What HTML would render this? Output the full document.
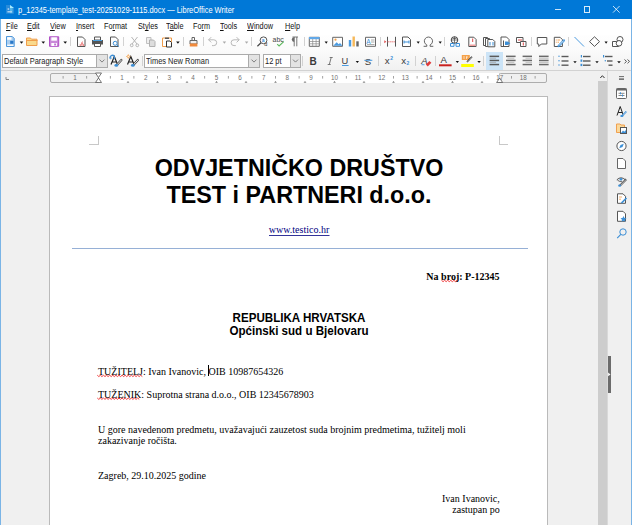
<!DOCTYPE html>
<html><head><meta charset="utf-8">
<style>
*{margin:0;padding:0;box-sizing:border-box}
html,body{width:632px;height:525px;overflow:hidden;background:#f0f0f0;font-family:"Liberation Sans",sans-serif;position:relative}
.a{position:absolute}
svg{position:absolute;overflow:visible}
#title{left:0;top:0;width:632px;height:19px;background:#0078d7;color:#fff}
.ui{font-size:7.3px;white-space:nowrap;line-height:10px}
#menu u{text-decoration:underline;text-decoration-thickness:0.7px;text-underline-offset:0.5px}
#menu span{font-size:8.3px;transform:scaleX(0.88);transform-origin:0 0;color:#111}
#menu{left:1px;top:19px;width:630px;height:16px;background:#fff;color:#000}
#tbs{left:1px;top:35px;width:630px;height:35px;background:linear-gradient(#fefefe,#fbfbfb 40%,#f1f1f1)}
#tbline{left:1px;top:70px;width:630px;height:1px;background:#d2d2d2}
#page{left:49px;top:96px;width:499px;height:440px;background:#fff;border:1px solid #bababa}
.bl{left:0;top:19px;width:1px;height:506px;background:#7ab4e6}
.br{left:631px;top:19px;width:1px;height:506px;background:#7ab4e6}
.serif{font-family:"Liberation Serif",serif;font-size:10px;line-height:12px;white-space:nowrap;color:#000}
.sans{font-family:"Liberation Sans",sans-serif;white-space:nowrap;color:#000;font-weight:bold}
.sq{height:3px;background-image:linear-gradient(135deg,transparent 40%,#e33 40%,#e33 65%,transparent 65%),linear-gradient(45deg,transparent 40%,#e33 40%,#e33 65%,transparent 65%);background-size:3px 3px;background-repeat:repeat-x}
</style></head><body>
<div id="title" class="a">
  <svg style="left:0;top:0" width="20" height="19" viewBox="0 0 20 19"><path d="M6 5h4l4 3v5.7h-8z" fill="#3a93dc" opacity="0.7"/><path d="M10 4.9l4 3.1h-4z" fill="#a8ecff"/><rect x="10" y="8" width="2.6" height="5.2" fill="#5fc0ee" opacity="0.8"/><rect x="7.6" y="8.3" width="1.6" height="1.5" fill="#b8d8f5"/><rect x="7.4" y="11.1" width="4.6" height="1.4" fill="#b0d4f2"/></svg>
  <div class="a ui" style="left:17.8px;top:4.6px;color:#fff;font-size:8.4px;transform:scaleX(0.887);transform-origin:0 0">p_12345-template_test-20251029-1115.docx — LibreOffice Writer</div>
  <div class="a" style="left:554.6px;top:9px;width:6.6px;height:1px;background:rgba(255,255,255,0.8)"></div>
  <div class="a" style="left:584px;top:6.2px;width:6.4px;height:6.6px;border:0.9px solid rgba(255,255,255,0.85)"></div>
  <svg style="left:613px;top:6.2px" width="7" height="7" viewBox="0 0 7 7"><path d="M0 0L6.6 6.6M6.6 0L0 6.6" stroke="rgba(255,255,255,0.85)" stroke-width="0.9"/></svg>
</div>
<div id="menu" class="a ui">
<span class="a" style="left:5px;top:2.3px"><u>F</u>ile</span><span class="a" style="left:26px;top:2.3px"><u>E</u>dit</span><span class="a" style="left:49px;top:2.3px"><u>V</u>iew</span><span class="a" style="left:75px;top:2.3px"><u>I</u>nsert</span><span class="a" style="left:103px;top:2.3px">Fo<u>r</u>mat</span><span class="a" style="left:137px;top:2.3px">St<u>y</u>les</span><span class="a" style="left:165px;top:2.3px">T<u>a</u>ble</span><span class="a" style="left:192px;top:2.3px">Fo<u>r</u>m</span><span class="a" style="left:219px;top:2.3px"><u>T</u>ools</span><span class="a" style="left:246px;top:2.3px"><u>W</u>indow</span><span class="a" style="left:284px;top:2.3px"><u>H</u>elp</span>
</div>
<div id="tbs" class="a"></div>
<div id="tbline" class="a"></div>
<svg style="left:0;top:0" width="632" height="90" viewBox="0 0 632 90" shape-rendering="geometricPrecision">
<g fill="none" stroke-width="1">
<!-- new doc -->
<path d="M6.5 36.5h5.8l1.9 1.9v8.1h-7.7z" fill="#a9cdef" stroke="#4f97da"/>
<rect x="7.2" y="37.2" width="4.3" height="2.6" fill="#fff"/>
<rect x="7.2" y="44.6" width="6.2" height="1.3" fill="#fff"/>
<path d="M10.2 40.8h3.2v3h-3.2z" fill="#2a78c8"/>
<!-- open folder -->
<path d="M26.5 38h4l1 1.2h5.5v6.3h-10.5z" stroke="#ef9c4a" fill="#f9d98c"/>
<path d="M26.5 40.5h11" stroke="#ef9c4a"/>
<!-- save -->
<path d="M49.5 36.8h9.2v9.5h-9.2z" stroke="#b050c6" fill="#c98ad8"/>
<rect x="51.3" y="37.3" width="5.6" height="3.4" fill="#fff"/>
<rect x="51.3" y="43" width="5.6" height="3" fill="#fff"/>
<rect x="54.3" y="43.5" width="1.5" height="2" fill="#b050c6"/>
<!-- pdf -->
<path d="M77.5 37h5l2.5 2.5v7h-7.5z" stroke="#555"/>
<path d="M82.5 41.5l-2 4.2M82 42.5l2 3.5M79.5 45h4.5" stroke="#e86a6a" stroke-width="0.8"/>
<!-- print -->
<path d="M94.5 37h6v3h-6z" stroke="#555" fill="#fff"/>
<rect x="92" y="40" width="11" height="4.5" fill="#555"/>
<path d="M93 40.5h9" stroke="#4aa0e0"/>
<path d="M94.5 44v2.5h6v-2.5" stroke="#555" fill="#fff"/>
<!-- print preview -->
<path d="M110.5 37h5l2.5 2.5v7h-7.5z" stroke="#555"/>
<circle cx="115.2" cy="43.3" r="2" stroke="#3c8fd6"/>
<path d="M116.6 44.7l2.3 2" stroke="#3c8fd6"/>
<!-- cut -->
<path d="M131.5 37l5.5 7M137.5 37l-5.5 7" stroke="#b5b5b5"/>
<circle cx="131.7" cy="45.3" r="1.4" stroke="#b5b5b5"/>
<circle cx="137.3" cy="45.3" r="1.4" stroke="#b5b5b5"/>
<!-- copy -->
<path d="M146.5 37.5h4.5v6h-4.5z" stroke="#c0c0c0" fill="#eee"/>
<path d="M149.5 40h4l1.5 1.5v5h-5.5z" stroke="#b0b0b0" fill="#ddd"/>
<!-- paste -->
<path d="M162.5 38h9v8.5h-9z" stroke="#ef9c4a" fill="#fff"/>
<path d="M165 37.5h4v1.5h-4z" fill="#555"/>
<path d="M166.5 41h3.5l1.5 1.5v4.5h-5z" stroke="#333" fill="#fff"/>
<!-- clone -->
<path d="M192 37.5h2.5v3h-2.5z" stroke="#666" fill="#fff"/>
<path d="M190 40.5h7v3.5h-7z" fill="#f0f0f0" stroke="#666"/>
<rect x="189.8" y="43.5" width="7.6" height="3" fill="#f08a3c"/>
<!-- undo -->
<path d="M208.6 39.8l2.6-2.6M208.6 39.8l2.6 2.6M208.6 39.8h5.2a2.9 2.9 0 0 1 0 5.8h-1.8" stroke="#b9b9b9"/>
<!-- redo -->
<path d="M239.2 39.8l-2.6-2.6M239.2 39.8l-2.6 2.6M239.2 39.8h-5.2a2.9 2.9 0 0 0 0 5.8h1.8" stroke="#b9b9b9"/>
<!-- find replace -->
<circle cx="263.5" cy="40.3" r="3.4" stroke="#555" fill="#fff"/>
<path d="M261 42.8l-3.6 3.4" stroke="#444" stroke-width="1.2"/>
<text x="261.8" y="42" font-family="Liberation Sans" font-weight="bold" font-size="5" fill="#3c8fd6">a</text>
<text x="264.3" y="46.3" font-family="Liberation Sans" font-size="5.5" fill="#333">d</text>
<!-- ¶ -->
<path d="M294.2 37v9.3M296.8 37v9.3M292.5 37h5.5" stroke="#6a6a6a" stroke-width="0.9"/>
<path d="M294.2 37.2a2.4 2.4 0 0 0 0 4.8z" fill="#6a6a6a"/>
<!-- table -->
<path d="M309.3 37.3h10v9h-10z" stroke="#666" fill="#fff"/>
<rect x="309" y="37" width="10.6" height="2.2" fill="#62a8e8"/>
<path d="M309.5 41.5h10M309.5 43.8h10M312.7 39v7M316.1 39v7" stroke="#888" stroke-width="0.7"/>
<!-- image -->
<path d="M332.7 37.3h9.8v9h-9.8z" stroke="#666" fill="#fff"/>
<circle cx="335.5" cy="39.7" r="1.1" fill="#f5a24a"/>
<path d="M333.2 45.8l3.5-3.5 2 2 1.3-1.3 2.5 2.8z" fill="#4b9be0"/>
<!-- chart -->
<rect x="348.8" y="40" width="2.4" height="6.5" fill="#4b9be0"/>
<rect x="352.5" y="36.5" width="2.4" height="10" fill="#f6b859"/>
<rect x="356.3" y="41.3" width="2.4" height="5.2" fill="#666"/>
<!-- text box -->
<path d="M365.5 37.3h10v9h-10z" stroke="#666" fill="#fff"/>
<text x="366.3" y="43.6" font-family="Liberation Sans" font-size="6.5" fill="#3c8fd6">A</text>
<path d="M371 40h3.5M371 42h3.5M367 44.5h7.5" stroke="#888" stroke-width="0.7"/>
<!-- page break -->
<path d="M387.5 36.8v9.8M395.5 36.8v9.8" stroke="#555"/>
<path d="M387.5 41.8h8" stroke="#e86a6a" stroke-dasharray="1.3 0.7"/>
<path d="M384.3 40.3l2 1.5-2 1.5z" fill="#e04848"/>
<!-- field -->
<path d="M402.5 37h5.5l2.5 2.5v7h-8z" stroke="#555" fill="#fff"/>
<path d="M404 42h5M404 40.5v3M409 40.5v3" stroke="#3c8fd6"/>
<!-- omega -->
<path d="M423.6 46.3h3.2v-1.4a4.1 4.1 0 1 1 3.3 0v1.4h3.2" stroke="#555" stroke-width="0.9" fill="none"/>
<!-- hyperlink -->
<circle cx="454.5" cy="40" r="3.3" stroke="#444"/>
<path d="M451.2 40h6.6M454.5 36.7v6.6M452.5 38.5h4" stroke="#444" stroke-width="0.7"/>
<path d="M450.5 43.5h3.5v2.8h-3.5zM456 43.5h3.5v2.8h-3.5z" stroke="#3c8fd6" fill="#fff"/>
<!-- footnote -->
<path d="M468.8 37.2h5l2.3 2.3v7h-7.3z" stroke="#555" fill="#fff"/>
<path d="M472.7 38.5v3.5" stroke="#e04848"/>
<rect x="469.3" y="44.5" width="6.3" height="1.5" fill="#f2a0a0"/>
<!-- endnote -->
<path d="M483.5 37.5h4v8h-4z" stroke="#555" fill="#fff"/>
<path d="M485.5 38.5h4v8h-4z" stroke="#555" fill="#fff"/>
<path d="M487.8 39.5h5l2 2v5.3h-7z" stroke="#555" fill="#fff"/>
<path d="M490 42v3.5M493 42v3.5" stroke="#3c8fd6"/>
<!-- bookmark -->
<path d="M501 37h5.5l2.5 2.5v7h-8z" stroke="#555" fill="#fff"/>
<path d="M503.5 40.5v6" stroke="#555"/>
<path d="M505 41.5h2.5l2.8 1.8-2.8 1.8h-2.5z" fill="#3c8fd6"/>
<!-- cross ref -->
<path d="M516.5 37.5h6.5v5h-6.5z" stroke="#555" fill="#fff"/>
<path d="M518 40h4" stroke="#e04848"/>
<path d="M520.5 41.5h5.5v5h-5.5z" stroke="#555" fill="#fff"/>
<path d="M523.3 42.5v3" stroke="#e04848"/>
<!-- comment -->
<path d="M537.3 37.5h9.5v6.5h-5.5l-2.5 2.5v-2.5h-1.5z" stroke="#555" fill="#fff"/>
<!-- track changes -->
<path d="M554.3 37.3h5.8l2.3 2.3v6.9h-8.1z" stroke="#555" fill="#fff"/>
<path d="M555.8 40h1M557.5 40h2.5M555.8 42.2h1M557.5 42.2h1.5" stroke="#ef9c4a" stroke-width="0.9"/>
<path d="M558.6 46l5.3-5.6" stroke="#3c8fd6" stroke-width="2.2" stroke-linecap="round"/>
<path d="M558.9 45.6l4.8-5" stroke="#fff" stroke-width="0.8"/>
<!-- line -->
<path d="M574.5 37l9.5 9.5" stroke="#4b9be0"/>
<!-- diamond -->
<path d="M594.5 36.8l5 4.8-5 4.8-5-4.8z" stroke="#555" fill="#fff"/>
<!-- shapes -->
<path d="M612.5 41.5h6v5h-6z" stroke="#555" fill="#fff"/>
<circle cx="620" cy="39.5" r="3" stroke="#555" fill="#fff"/>
<circle cx="619" cy="43.3" r="2.8" stroke="#555" fill="#fff"/>
</g>
<!-- separators tb1 -->
<g fill="#d2d2d2">
<rect x="70" y="37" width="1" height="9"/><rect x="123" y="37" width="1" height="9"/><rect x="183" y="37" width="1" height="9"/><rect x="203" y="37" width="1" height="9"/><rect x="251" y="37" width="1" height="9"/><rect x="304" y="37" width="1" height="9"/><rect x="380" y="37" width="1" height="9"/><rect x="444" y="37" width="1" height="9"/><rect x="531" y="37" width="1" height="9"/><rect x="568" y="37" width="1" height="9"/>
</g>
<!-- dropdown arrows tb1 -->
<g fill="#111">
<path d="M19.7 41.6h3.6l-1.8 2.2z"/><path d="M41.5 41.6h3.6l-1.8 2.2z"/><path d="M63.4 41.6h3.6l-1.8 2.2z"/><path d="M176.1 41.6h3.6l-1.8 2.2z"/><path d="M324.6 41.6h3.2l-1.6 2.2z"/><path d="M416.6 41.6h3.2l-1.6 2.2z"/><path d="M438.6 41.6h3.2l-1.6 2.2z"/><path d="M604.5 41.6h3.2l-1.6 2.2z"/>
</g>
<g fill="#aaa"><path d="M222.7 41.6h3.4l-1.7 2.2z"/><path d="M244.9 41.6h3.4l-1.7 2.2z"/></g>
</svg>

<svg style="left:0;top:0" width="632" height="90" viewBox="0 0 632 90">
<!-- para style box -->
<rect x="2.5" y="54.5" width="105" height="13" fill="#fff" stroke="#ababab"/>
<rect x="96.5" y="54.5" width="11" height="13" fill="#e3e3e3" stroke="#ababab"/>
<path d="M99.5 59.6l2.5 2.5 2.5-2.5" stroke="#666" fill="none" stroke-width="0.8"/>
<!-- font box -->
<rect x="144.5" y="54.5" width="115" height="13" fill="#fff" stroke="#ababab"/>
<rect x="248.5" y="54.5" width="11" height="13" fill="#e3e3e3" stroke="#ababab"/>
<path d="M251.5 59.6l2.5 2.5 2.5-2.5" stroke="#666" fill="none" stroke-width="0.8"/>
<!-- size box -->
<rect x="263.5" y="54.5" width="37" height="13" fill="#fff" stroke="#ababab"/>
<rect x="290.5" y="54.5" width="10" height="13" fill="#e3e3e3" stroke="#ababab"/>
<path d="M293 59.6l2.5 2.5 2.5-2.5" stroke="#666" fill="none" stroke-width="0.8"/>
<!-- update style -->
<g fill="none">
<path d="M111 64.5l3.3-8 3.3 8M112.2 62h4.2" stroke="#222" stroke-width="1.2"/>
<path d="M116.8 65l4.6-5" stroke="#444" stroke-width="2.2" stroke-linecap="round"/>
<path d="M116.8 65l4.6-5" stroke="#fff" stroke-width="0.9" stroke-linecap="round"/>
<ellipse cx="116.3" cy="65.4" rx="1.9" ry="1.3" fill="#3c8fd6"/>
<path d="M110.3 58.3a2.2 2.2 0 1 1 3.6 0.8" stroke="#3c8fd6" stroke-width="1.3"/>
<path d="M109.5 57.5l1 1.5 1.3-1.2" stroke="#3c8fd6" stroke-width="0.9"/>
<!-- new style -->
<path d="M127.5 64.5l3.3-8 3.3 8M128.7 62h4.2" stroke="#222" stroke-width="1.2"/>
<path d="M133.3 65l4.6-5" stroke="#444" stroke-width="2.2" stroke-linecap="round"/>
<path d="M133.3 65l4.6-5" stroke="#fff" stroke-width="0.9" stroke-linecap="round"/>
<ellipse cx="132.8" cy="65.4" rx="1.9" ry="1.3" fill="#3c8fd6"/>
<circle cx="128.3" cy="56.5" r="1.1" stroke="#f5a24a" stroke-width="0.9"/>
<path d="M128.3 54.3v0.8M128.3 57.9v0.8M126.1 56.5h0.8M129.7 56.5h0.8" stroke="#f5a24a" stroke-width="0.7"/>
</g>
<!-- B I U S -->
<text x="309.5" y="64.7" font-family="Liberation Sans" font-weight="bold" font-size="10" fill="#3a3a3a">B</text>
<path d="M329.7 57.5h3M327.7 64.5h3M331.2 57.5l-1.9 7" stroke="#6a6a6a" stroke-width="0.9" fill="none"/>
<text x="341.6" y="64" font-family="Liberation Sans" font-size="9.3" fill="#3a3a3a">U</text>
<rect x="342" y="65" width="6.6" height="1" fill="#4b9be0"/>
<text x="364.8" y="64.9" font-family="Liberation Sans" font-size="9.6" fill="#3a3a3a">S</text>
<rect x="364.3" y="59.8" width="8" height="1" fill="#4b9be0"/>
<!-- x2 -->
<text x="384.8" y="63.7" font-family="Liberation Sans" font-size="9.8" fill="#3a3a3a">x</text>
<text x="390.2" y="59.6" font-family="Liberation Sans" font-weight="bold" font-size="5" fill="#3c8fd6">2</text>
<text x="401.3" y="63.7" font-family="Liberation Sans" font-size="9.8" fill="#3a3a3a">x</text>
<text x="406.4" y="65" font-family="Liberation Sans" font-weight="bold" font-size="5" fill="#3c8fd6">2</text>
<!-- clear formatting -->
<text x="421.3" y="63.5" font-family="Liberation Sans" font-style="italic" font-size="9.5" fill="#3a3a3a">A</text>
<rect x="421.5" y="64.3" width="3" height="0.9" fill="#4b9be0"/>
<path d="M425.8 64.6l3.6-3.7 2 1.9-3.6 3.7z" fill="#e03a3a"/>
<!-- font color -->
<text x="440.6" y="63.1" font-family="Liberation Sans" font-size="9.6" fill="#333">A</text>
<rect x="439" y="64.3" width="12.6" height="2" fill="#c9211e"/>
<!-- highlight -->
<rect x="461.8" y="55" width="8" height="5" fill="#f5a24a"/>
<path d="M464 56v3M466.5 56.5v2.5M466 57h2" stroke="#fff" stroke-width="0.6"/>
<path d="M467 62l5-5.3" stroke="#333" stroke-width="1.5"/>
<path d="M467.2 62.2l4.7-5" stroke="#fff" stroke-width="0.5"/>
<rect x="461.2" y="64" width="12.6" height="3" fill="#ffff00"/>
<!-- align left active -->
<rect x="486" y="52" width="17" height="18" fill="#cce4f7"/>
<g fill="#5a5a5a">
<rect x="489.6" y="55.6" width="9.5" height="1.5"/><rect x="489.6" y="59.7" width="9.5" height="1.5"/><rect x="489.6" y="63.8" width="9.5" height="1.5"/>
</g>
<g fill="#9a9a9a"><rect x="489.6" y="57.8" width="6.5" height="0.7"/><rect x="489.6" y="61.9" width="6.5" height="0.7"/></g>
<g fill="#6a6a6a">
<rect x="506" y="55.6" width="9.6" height="1.5"/><rect x="506" y="59.7" width="9.6" height="1.5"/><rect x="506" y="63.8" width="9.6" height="1.5"/>
<rect x="522.6" y="55.6" width="9.4" height="1.5"/><rect x="522.6" y="59.7" width="9.4" height="1.5"/><rect x="522.6" y="63.8" width="9.4" height="1.5"/>
<rect x="539" y="55.6" width="9.6" height="1.5"/><rect x="539" y="59.7" width="9.6" height="1.5"/><rect x="539" y="63.8" width="9.6" height="1.5"/>
</g>
<g fill="#a8a8a8">
<rect x="507.3" y="57.8" width="7" height="0.7"/><rect x="507.3" y="61.9" width="7" height="0.7"/>
<rect x="525.5" y="57.8" width="6.5" height="0.7"/><rect x="525.5" y="61.9" width="6.5" height="0.7"/>
<rect x="539" y="57.8" width="9.6" height="0.7"/><rect x="539" y="61.9" width="9.6" height="0.7"/>
</g>
<!-- bullets -->
<g fill="#3c8fd6"><circle cx="559" cy="56.3" r="0.7"/><circle cx="559" cy="60.8" r="0.7"/><circle cx="559" cy="65" r="0.7"/></g>
<g fill="#5a5a5a"><rect x="561.5" y="55.8" width="7" height="1.4"/><rect x="561.5" y="60.3" width="7" height="1.4"/><rect x="561.5" y="64.5" width="7" height="1.4"/></g>
<!-- numbering -->
<g fill="#3c8fd6"><rect x="580.8" y="55" width="1.2" height="2.5"/><rect x="580.5" y="59.5" width="1.8" height="2.3"/><rect x="580.5" y="63.8" width="1.8" height="2.3"/></g>
<g fill="#5a5a5a"><rect x="583" y="55.8" width="7.5" height="1.4"/><rect x="583" y="60.3" width="7.5" height="1.4"/><rect x="583" y="64.5" width="7.5" height="1.4"/></g>
<!-- outline -->
<g fill="#3c8fd6"><rect x="603" y="55" width="1.2" height="2.5"/><circle cx="605.3" cy="60.8" r="0.7"/></g>
<g fill="#5a5a5a"><rect x="605" y="55.8" width="7.5" height="1.4"/><rect x="607" y="60.3" width="5.5" height="1.4"/><rect x="608.5" y="64.5" width="4" height="1.4"/></g>
<!-- » -->
<path d="M624.5 59.5l2 1.9-2 1.9M627.5 59.5l2 1.9-2 1.9" stroke="#444" fill="none" stroke-width="0.9"/>
<!-- separators -->
<g fill="#d2d2d2">
<rect x="142" y="56" width="1" height="10"/><rect x="302" y="56" width="1" height="10"/><rect x="378" y="56" width="1" height="10"/><rect x="415" y="56" width="1" height="10"/><rect x="435" y="56" width="1" height="10"/><rect x="483" y="56" width="1" height="10"/><rect x="553" y="56" width="1" height="10"/>
</g>
<g fill="#111">
<path d="M355.7 61.1h3.3l-1.65 1.9z"/><path d="M455.7 61.1h3.3l-1.65 1.9z"/><path d="M477.3 61.1h3.5l-1.75 2z"/><path d="M573.3 61.3h3.4l-1.7 2z"/><path d="M595.3 61.3h3.4l-1.7 2z"/><path d="M617.2 61.3h3.6l-1.8 2z"/>
</g>
</svg>

<div class="a ui" style="left:4.3px;top:57.4px;color:#222;font-size:8.2px;transform:scaleX(0.91);transform-origin:0 0">Default Paragraph Style</div>
<div class="a ui" style="left:146px;top:57.4px;color:#222;font-size:8.2px;transform:scaleX(0.91);transform-origin:0 0">Times New Roman</div>
<div class="a ui" style="left:265px;top:57.4px;color:#222;font-size:8.2px;transform:scaleX(0.91);transform-origin:0 0">12 pt</div>
<svg style="left:0;top:0" width="632" height="90"><text x="272.6" y="41.7" font-family="Liberation Sans" font-size="7.6" fill="#444" textLength="11.2" lengthAdjust="spacingAndGlyphs">abc</text><path d="M277.2 44.2l1.9 1.8 4.6-4.3" stroke="#5cb85c" fill="none" stroke-width="1.1"/></svg>
<svg style="left:0;top:0" width="632" height="90" viewBox="0 0 632 90">
<rect x="50.5" y="73.5" width="48" height="9" rx="1.5" fill="#f0f0f0" stroke="#adadad" stroke-width="1"/>
<rect x="499" y="73.5" width="47.5" height="9" rx="1.5" fill="#f0f0f0" stroke="#adadad" stroke-width="1"/>
<rect x="99" y="73" width="400" height="10" fill="#fff"/>
<rect x="62.7" y="76" width="0.8" height="2.6" fill="#8c8c8c"/>
<text x="74.9" y="80" text-anchor="middle" font-family="Liberation Sans" font-size="6.3" fill="#707070">1</text>
<rect x="86.3" y="76" width="0.8" height="2.6" fill="#8c8c8c"/>
<rect x="109.9" y="76" width="0.8" height="2.6" fill="#8c8c8c"/>
<text x="122.1" y="80" text-anchor="middle" font-family="Liberation Sans" font-size="6.3" fill="#707070">1</text>
<rect x="133.5" y="76" width="0.8" height="2.6" fill="#8c8c8c"/>
<text x="145.7" y="80" text-anchor="middle" font-family="Liberation Sans" font-size="6.3" fill="#707070">2</text>
<rect x="157.1" y="76" width="0.8" height="2.6" fill="#8c8c8c"/>
<text x="169.3" y="80" text-anchor="middle" font-family="Liberation Sans" font-size="6.3" fill="#707070">3</text>
<rect x="180.7" y="76" width="0.8" height="2.6" fill="#8c8c8c"/>
<text x="192.9" y="80" text-anchor="middle" font-family="Liberation Sans" font-size="6.3" fill="#707070">4</text>
<rect x="204.3" y="76" width="0.8" height="2.6" fill="#8c8c8c"/>
<text x="216.5" y="80" text-anchor="middle" font-family="Liberation Sans" font-size="6.3" fill="#707070">5</text>
<rect x="227.9" y="76" width="0.8" height="2.6" fill="#8c8c8c"/>
<text x="240.1" y="80" text-anchor="middle" font-family="Liberation Sans" font-size="6.3" fill="#707070">6</text>
<rect x="251.5" y="76" width="0.8" height="2.6" fill="#8c8c8c"/>
<text x="263.7" y="80" text-anchor="middle" font-family="Liberation Sans" font-size="6.3" fill="#707070">7</text>
<rect x="275.1" y="76" width="0.8" height="2.6" fill="#8c8c8c"/>
<text x="287.3" y="80" text-anchor="middle" font-family="Liberation Sans" font-size="6.3" fill="#707070">8</text>
<rect x="298.7" y="76" width="0.8" height="2.6" fill="#8c8c8c"/>
<text x="310.9" y="80" text-anchor="middle" font-family="Liberation Sans" font-size="6.3" fill="#707070">9</text>
<rect x="322.3" y="76" width="0.8" height="2.6" fill="#8c8c8c"/>
<text x="334.5" y="80" text-anchor="middle" font-family="Liberation Sans" font-size="6.3" fill="#707070">10</text>
<rect x="345.9" y="76" width="0.8" height="2.6" fill="#8c8c8c"/>
<text x="358.1" y="80" text-anchor="middle" font-family="Liberation Sans" font-size="6.3" fill="#707070">11</text>
<rect x="369.5" y="76" width="0.8" height="2.6" fill="#8c8c8c"/>
<text x="381.7" y="80" text-anchor="middle" font-family="Liberation Sans" font-size="6.3" fill="#707070">12</text>
<rect x="393.1" y="76" width="0.8" height="2.6" fill="#8c8c8c"/>
<text x="405.3" y="80" text-anchor="middle" font-family="Liberation Sans" font-size="6.3" fill="#707070">13</text>
<rect x="416.7" y="76" width="0.8" height="2.6" fill="#8c8c8c"/>
<text x="428.9" y="80" text-anchor="middle" font-family="Liberation Sans" font-size="6.3" fill="#707070">14</text>
<rect x="440.3" y="76" width="0.8" height="2.6" fill="#8c8c8c"/>
<text x="452.5" y="80" text-anchor="middle" font-family="Liberation Sans" font-size="6.3" fill="#707070">15</text>
<rect x="463.9" y="76" width="0.8" height="2.6" fill="#8c8c8c"/>
<text x="476.1" y="80" text-anchor="middle" font-family="Liberation Sans" font-size="6.3" fill="#707070">16</text>
<rect x="487.5" y="76" width="0.8" height="2.6" fill="#8c8c8c"/>
<text x="499.7" y="80" text-anchor="middle" font-family="Liberation Sans" font-size="6.3" fill="#707070">17</text>
<rect x="511.1" y="76" width="0.8" height="2.6" fill="#8c8c8c"/>
<text x="523.3" y="80" text-anchor="middle" font-family="Liberation Sans" font-size="6.3" fill="#707070">18</text>
<rect x="534.7" y="76" width="0.8" height="2.6" fill="#8c8c8c"/>
<path d="M126.8 82.4h2.4M128.0 81v1.4" stroke="#666" stroke-width="0.6"/>
<path d="M156.3 82.4h2.4M157.5 81v1.4" stroke="#666" stroke-width="0.6"/>
<path d="M185.8 82.4h2.4M187.0 81v1.4" stroke="#666" stroke-width="0.6"/>
<path d="M215.3 82.4h2.4M216.5 81v1.4" stroke="#666" stroke-width="0.6"/>
<path d="M244.8 82.4h2.4M246.0 81v1.4" stroke="#666" stroke-width="0.6"/>
<path d="M274.3 82.4h2.4M275.5 81v1.4" stroke="#666" stroke-width="0.6"/>
<path d="M303.8 82.4h2.4M305.0 81v1.4" stroke="#666" stroke-width="0.6"/>
<path d="M333.3 82.4h2.4M334.5 81v1.4" stroke="#666" stroke-width="0.6"/>
<path d="M362.8 82.4h2.4M364.0 81v1.4" stroke="#666" stroke-width="0.6"/>
<path d="M392.3 82.4h2.4M393.5 81v1.4" stroke="#666" stroke-width="0.6"/>
<path d="M421.8 82.4h2.4M423.0 81v1.4" stroke="#666" stroke-width="0.6"/>
<path d="M451.3 82.4h2.4M452.5 81v1.4" stroke="#666" stroke-width="0.6"/>
<path d="M480.8 82.4h2.4M482.0 81v1.4" stroke="#666" stroke-width="0.6"/>
<path d="M95.5 73h6l-3 4.5z" fill="#fff" stroke="#555" stroke-width="0.8"/>
<path d="M95.5 82.5h6l-3-4.5z" fill="#fff" stroke="#555" stroke-width="0.8"/>
<path d="M496.6 82.5h6l-3-4.5z" fill="#fff" stroke="#555" stroke-width="0.8"/>
</svg>
<!-- ruler corner icon -->
<svg style="left:0;top:0" width="632" height="90"><path d="M6 77v2.5h3" stroke="#777" fill="none" stroke-width="0.9"/></svg>

<!-- document page -->
<div id="page" class="a"></div>
<svg style="left:0;top:0" width="632" height="525" viewBox="0 0 632 525">
<!-- corner marks -->
<path d="M89 144.5h9.5M98.5 136v9" stroke="#c8c8c8" fill="none" stroke-width="1"/>
<path d="M499.5 136v9M499 144.5h9" stroke="#c8c8c8" fill="none" stroke-width="1"/>
<g font-family="Liberation Sans" font-weight="bold" fill="#000">
<text x="299" y="175.5" text-anchor="middle" font-size="23.3">ODVJETNIČKO DRUŠTVO</text>
<text x="299" y="202.5" text-anchor="middle" font-size="23.3">TEST i PARTNERI d.o.o.</text>
<text x="299" y="321.6" text-anchor="middle" font-size="12.4" textLength="132.9" lengthAdjust="spacingAndGlyphs">REPUBLIKA HRVATSKA</text>
<text x="299" y="334.7" text-anchor="middle" font-size="12.4" textLength="139.2" lengthAdjust="spacingAndGlyphs">Općinski sud u Bjelovaru</text>
</g>
<g font-family="Liberation Serif" font-size="10" fill="#000">
<text x="299" y="233.3" text-anchor="middle" fill="#000080">www.testico.hr</text>
<text x="499.5" y="279.7" text-anchor="end" font-weight="bold">Na broj: P-12345</text>
<text x="98" y="374.9">TUŽITELJ: Ivan Ivanovic, OIB 10987654326</text>
<text x="98" y="397.7">TUŽENIK: Suprotna strana d.o.o., OIB 12345678903</text>
<text x="98" y="432.7">U gore navedenom predmetu, uvažavajući zauzetost suda brojnim predmetima, tužitelj moli</text>
<text x="98" y="443.6">zakazivanje ročišta.</text>
<text x="98" y="478.5">Zagreb, 29.10.2025 godine</text>
<text x="499.8" y="501.5" text-anchor="end">Ivan Ivanovic,</text>
<text x="499.8" y="512.6" text-anchor="end">zastupan po</text>
</g>
<rect x="269" y="235" width="60.5" height="0.8" fill="#000080"/>
<rect x="72" y="248" width="456" height="1" fill="#96b0d6"/>
<rect x="208" y="365" width="1" height="11" fill="#000"/>
</svg>
<svg style="left:0;top:0" width="632" height="525"><path d="M97.3 375.25 L98.8 376.55 L100.4 375.25 L101.9 376.55 L103.5 375.25 L105.0 376.55 L106.6 375.25 L108.1 376.55 L109.7 375.25 L111.2 376.55 L112.8 375.25 L114.3 376.55 L115.9 375.25 L117.4 376.55 L119.0 375.25 L120.5 376.55 L122.1 375.25 L123.6 376.55 L125.2 375.25 L126.7 376.55 L128.3 375.25 L129.8 376.55 L131.4 375.25 L132.9 376.55 L134.5 375.25 L136.1 376.55 L137.6 375.25 L139.2 376.55 L140.7 375.25 L142.3 376.55" stroke="#f03a3a" stroke-width="1" fill="none"/><path d="M97.3 398.05 L98.8 399.35 L100.4 398.05 L101.9 399.35 L103.5 398.05 L105.0 399.35 L106.6 398.05 L108.1 399.35 L109.7 398.05 L111.2 399.35 L112.8 398.05 L114.3 399.35 L115.9 398.05 L117.4 399.35 L119.0 398.05 L120.5 399.35 L122.1 398.05 L123.6 399.35 L125.2 398.05 L126.7 399.35 L128.3 398.05 L129.8 399.35 L131.4 398.05 L132.9 399.35 L134.5 398.05 L136.1 399.35 L137.6 398.05 L139.2 399.35" stroke="#f03a3a" stroke-width="1" fill="none"/><path d="M441.5 280.35 L443.1 281.65 L444.6 280.35 L446.2 281.65 L447.7 280.35 L449.3 281.65 L450.8 280.35 L452.4 281.65 L453.9 280.35 L455.5 281.65 L457.0 280.35" stroke="#f03a3a" stroke-width="1" fill="none"/></svg>

<div class="a" style="left:598px;top:81px;width:10px;height:444px;background:#cdcdcd"></div>
<div class="a" style="left:598px;top:71px;width:10px;height:10px;background:#f0f0f0"></div>
<div class="a" style="left:608px;top:71px;width:23px;height:454px;background:#f0f0f0"></div>
<div class="a" style="left:607px;top:71px;width:1px;height:454px;background:#d9d9d9"></div>
<div class="a" style="left:608px;top:356px;width:3px;height:37px;background:#6b6b6b"></div>
<svg style="left:0;top:0" width="632" height="525" viewBox="0 0 632 525">
<path d="M600.3 78l2.1-2.3 2.1 2.3" stroke="#333" fill="none" stroke-width="1"/>
<path d="M608.1 372.6l2.4 1.8-2.4 1.8z" fill="#fff"/>
<g fill="none" stroke-width="1">
<!-- menu -->
<rect x="619" y="76" width="5" height="1.1" fill="#777" stroke="none"/>
<rect x="619" y="78.3" width="5" height="1.7" fill="#777" stroke="none"/>
<!-- properties -->
<rect x="616.5" y="88.5" width="10" height="10" rx="1" stroke="#666" fill="#fff"/>
<rect x="616.5" y="88.5" width="10" height="2" fill="#666" stroke="none"/>
<path d="M618.5 93.3h6M618.5 95.5h6" stroke="#555" stroke-width="0.7"/>
<path d="M620.5 92.3v2M622.5 94.5v2" stroke="#3c8fd6" stroke-width="1"/>
<!-- styles -->
<path d="M617 115.5l3.2-9 3.2 9M618.2 112.5h4" stroke="#222"/>
<path d="M621.8 116.5l4.5-5" stroke="#3c8fd6" stroke-width="1.8"/>
<path d="M622 116.7l4.3-4.8" stroke="#fff" stroke-width="0.5"/>
<ellipse cx="621.8" cy="116" rx="1.6" ry="1.1" fill="#3c8fd6" stroke="none"/>
<!-- gallery -->
<path d="M616.5 124h3.5l1 1h3.5v7.5h-8z" stroke="#f0a050" fill="#fbd99a"/>
<rect x="620.5" y="127.5" width="6" height="6" stroke="#555" fill="#fff"/>
<path d="M621 133l2-2.5 1.3 1.3 1.7-1.8v3z" fill="#3c8fd6" stroke="none"/>
<!-- navigator -->
<circle cx="621.5" cy="146" r="4.6" stroke="#555" fill="#fff"/>
<path d="M623.8 143.7l-1.3 3.3-3.3 1.3 1.3-3.3z" fill="#3c8fd6" stroke="none"/>
<!-- page -->
<path d="M617.5 158.5h5.5l2.5 2.5v7.5h-8z" stroke="#666" fill="#fff"/>
<!-- style inspector -->
<path d="M616.8 179.8q4.2-4 8.6 0" stroke="#444" stroke-width="0.9"/>
<path d="M617.5 180.3q2.5 1.8 4.5 1" stroke="#444" stroke-width="0.8"/>
<circle cx="621" cy="179.3" r="1.3" fill="#3c8fd6" stroke="none"/>
<path d="M620 185.6l6.2-6.4" stroke="#444" stroke-width="2"/>
<path d="M620.2 185.6l6-6.2" stroke="#fff" stroke-width="0.7"/>
<ellipse cx="619.6" cy="185.7" rx="1.5" ry="1.1" fill="#3c8fd6" stroke="none"/>
<!-- manage changes -->
<path d="M617.5 193.8h5.5l2.5 2.5v7h-8z" stroke="#555" fill="#fff"/>
<path d="M619 197h3M619 199.2h2" stroke="#f0a050" stroke-width="0.8"/>
<path d="M621.5 203l5-5" stroke="#3c8fd6" stroke-width="1.7"/>
<!-- design -->
<path d="M617.5 211.3h5.5l2.5 2.5v7.5h-8z" stroke="#555" fill="#fff"/>
<path d="M623.5 216l1 2 2 .3-1.5 1.4.4 2-1.9-1-1.9 1 .4-2-1.5-1.4 2-.3z" fill="#3c8fd6" stroke="none"/>
<!-- find -->
<circle cx="623" cy="232" r="3.2" stroke="#3c8fd6"/>
<path d="M620.8 234.4l-3.6 3.8" stroke="#3c8fd6" stroke-width="1.1"/>
</g>
</svg>

<div class="bl a"></div>
<div class="br a"></div>
</body></html>
